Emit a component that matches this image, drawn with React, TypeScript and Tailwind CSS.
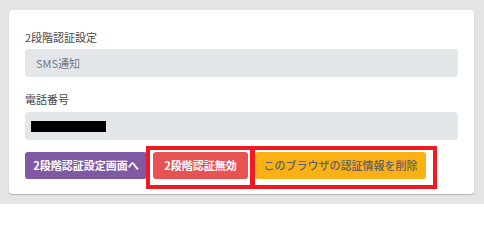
const font = {
  fontFamily: '"Noto Sans CJK JP", "Noto Sans", "Liberation Sans", sans-serif',
};

export default function App() {
  return (
    <div className="h-[204px] w-[484px] bg-[#e4e4e4] pl-[9px] pt-[10px]" style={font}>
      <div className="w-[465px] rounded-[4px] bg-white px-4 pb-[15px] pt-[19px] shadow-[0_1px_1px_rgba(0,0,0,0.22)]">
        <div className="text-[11px] leading-4 text-[#4a4a4a]">2段階認証設定</div>
        <div className="mt-1 flex h-7 items-center rounded-[4px] bg-[#e4e7ea] pl-[11px] text-[11px] text-[#6f7a85]">
          SMS通知
        </div>

        <div className="mt-[14px] text-[11px] leading-4 text-[#4a4a4a]">電話番号</div>
        <div className="mt-[5px] flex h-7 items-center rounded-[4px] bg-[#e4e7ea] pl-[6px]">
          <div className="h-[11px] w-[75px] bg-black" />
        </div>

        <div className="relative mt-3 flex h-[27px] items-stretch">
          <button className="w-[122px] rounded-[3px] bg-[#7f5aa2] text-[11px] font-bold text-white">
            2段階認証設定画面へ
          </button>
          <button className="ml-[6px] w-[95px] rounded-[3px] bg-[#e55353] text-[11px] font-bold text-white">
            2段階認証無効
          </button>
          <button className="ml-[7px] w-[171px] rounded-[3px] bg-[#f9b115] text-[11px] font-medium text-[#5f6064]">
            このブラウザの認証情報を削除
          </button>

          <div className="pointer-events-none absolute left-[121px] top-[-6px] h-[43px] w-[109px] border-4 border-[#ed1c24]" />
          <div className="pointer-events-none absolute left-[225px] top-[-6px] h-[43px] w-[187px] border-4 border-[#ed1c24]" />
        </div>
      </div>
    </div>
  );
}
